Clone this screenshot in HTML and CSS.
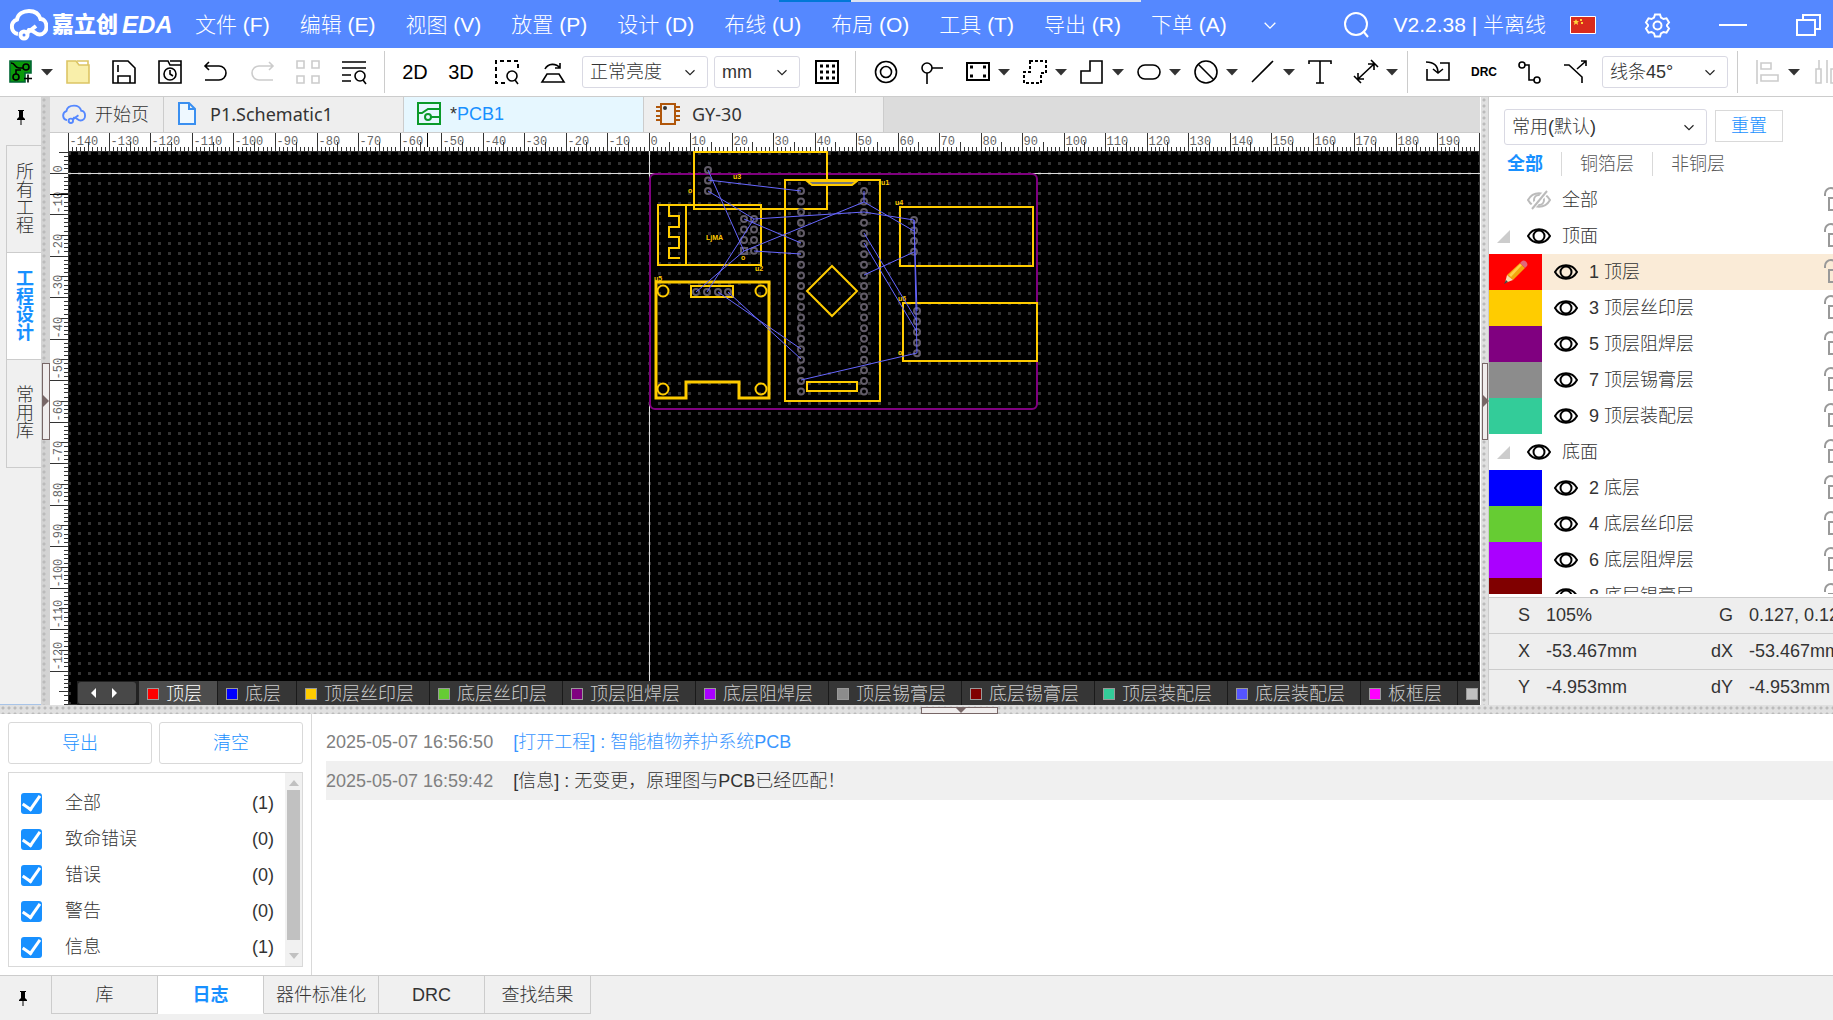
FILE: index.html
```html
<!DOCTYPE html>
<html lang="zh-CN">
<head>
<meta charset="utf-8">
<title>嘉立创EDA</title>
<link rel="stylesheet" href="styles.css">
</head>
<body>
<svg class="defs" aria-hidden="true">
  <symbol id="cloud" viewBox="0 0 38 32"><path d="M8 25a7.500 7.500 0 0 1-1-14.500C8 5 13 2 19 2c6 0 10 3 11.500 8 4 0 6 4 6 8s-3 7.500-7 7.500c-5 0-6-5-10.500-4.500L17 24"/><circle cx="14" cy="26" r="3.500"/><path d="M17 24l9-7"/></symbol>
  <symbol id="chev" viewBox="0 0 12 8"><path d="M2 2l4 4 4-4"/></symbol>
  <symbol id="caret" viewBox="0 0 12 8"><path d="M0 1h12L6 7.500z"/></symbol>
  <symbol id="eye" viewBox="0 0 24 16"><path d="M1 8c5-9 17-9 22 0-5 9-17 9-22 0z"/><circle cx="12" cy="8" r="5.500"/></symbol>
  <symbol id="eyeoff" viewBox="0 0 24 20"><path d="M1 10c5-9 17-9 22 0-5 9-17 9-22 0z"/><circle cx="12" cy="10" r="5"/><path d="M20 1L4 19" stroke="#fff" stroke-width="5"/><path d="M20 1L5 19"/></symbol>
  <symbol id="lock" viewBox="0 0 24 26"><path d="M1 9V7a6 6 0 0 1 12 0v4M5 11h16v12H5z"/></symbol>
  <symbol id="fold" viewBox="0 0 13 13"><path d="M13 0v13H0z"/></symbol>
  <symbol id="pin" viewBox="0 0 10 16"><path d="M2 1h6v1H7v6l2 2v1H5.500v5h-1v-5H1v-1l2-2V2H2z"/></symbol>
</svg>

<header class="title">
  <div class="progress"><i></i></div>
  <a class="logo" href="#"><svg width="38" height="32"><use href="#cloud"/></svg><b>嘉立创</b><em>EDA</em></a>
  <nav class="menu">
    <button>文件 (F)</button><button>编辑 (E)</button><button>视图 (V)</button><button>放置 (P)</button><button>设计 (D)</button><button>布线 (U)</button><button>布局 (O)</button><button>工具 (T)</button><button>导出 (R)</button><button>下单 (A)</button>
    <button class="more" aria-label="更多"><svg width="16" height="11"><use href="#chev"/></svg></button>
  </nav>
  <div class="info">
    <button aria-label="搜索"><svg width="25" height="26" viewBox="0 0 25 26"><circle cx="12" cy="12" r="11"/><path d="M19 19l5 6"/></svg></button>
    <span>V2.2.38 | 半离线</span>
    <svg class="flag" width="26" height="18" viewBox="0 0 26 18"><path fill="#d92b1c" stroke="#fff" d="M.5.500h25v17H.5z"/><path fill="#ffd43b" stroke="none" d="M6 3l1 2h2L7.500 6.500 8 9 6 7.500 4 9l.5-2.500L3 5h2zM10 3h2v2h-2zM11 6h2v2h-2z"/></svg>
  </div>
  <div class="win">
    <button aria-label="设置"><svg width="25" height="25" viewBox="0 0 25 25"><path d="M10 1.500h5l1 3 2.500 1.500 3-.7L24 9.500 22 12v1l2 2.500-2.500 4.200-3-.7-2.500 1.500-1 3h-5l-1-3L6.500 19l-3 .7L1 15.500 3 13v-1L1 9.500l2.500-4.200 3 .7L9 4.500z"/><circle cx="12.500" cy="12.500" r="4"/></svg></button>
    <button aria-label="最小化"><svg width="28" height="24" viewBox="0 0 28 24"><path d="M0 12h28"/></svg></button>
    <button aria-label="还原"><svg width="25" height="22" viewBox="0 0 25 22"><path d="M1 6h18v15H1zM7 6V1h17v14h-5"/></svg></button>
  </div>
</header>

<div class="toolbar">
  <div class="group">
    <button class="drop" aria-label="新建"><svg width="24" height="24"><path fill="#0a9a0a" stroke="#063" d="M1 1h21v12h-6v9H1z"/><circle cx="17" cy="7" r="3"/><circle cx="7" cy="17" r="3"/><path d="M2 3c5 0 3 5 8 5h4M7 14v-4h5M15 18.500h8M19 14.500v8"/></svg><svg class="caret" width="12" height="8"><use href="#caret"/></svg></button>
    <button aria-label="打开"><svg width="24" height="24"><path fill="#f9efaa" stroke="#dcc564" d="M1 1h9l3 4h10v18H1z"/><path stroke="#dcc564" d="M11 1h11v4"/></svg></button>
    <button aria-label="保存"><svg width="24" height="24"><path d="M1 1h15l7 7v15H1zM6 23v-7h12v7M6 5v7"/></svg></button>
    <button aria-label="历史"><svg width="24" height="24"><path d="M1 23V1h9l2 4h11v18zM12 1h11v4"/><circle cx="12" cy="14" r="6"/><path d="M12 10v4l3 2"/></svg></button>
    <button aria-label="撤销"><svg width="24" height="24"><path d="M5 2L1 6l4 4M1 6h14a7 7 0 0 1 0 14H1"/></svg></button>
    <button class="off" aria-label="重做"><svg width="24" height="24"><path d="M19 2l4 4-4 4M23 6H9a7 7 0 0 0 0 14h14"/></svg></button>
    <button class="off" aria-label="阵列"><svg width="24" height="24"><path d="M1 1h7v7H1zM16 1h7v7h-7zM1 16h7v7H1zM16 16h7v7h-7z"/></svg></button>
    <button aria-label="查找"><svg width="24" height="24"><path d="M0 2h24M0 8h24M0 15h9M0 21h9M21 20l3 4"/><circle cx="18" cy="16" r="5"/></svg></button>
  </div>
  <i class="sep"></i>
  <div class="group">
    <button class="word">2D</button>
    <button class="word">3D</button>
    <button aria-label="框选"><svg width="24" height="24"><path stroke-dasharray="4 3" stroke-width="2" d="M10 23H1V1h22v9"/><circle cx="17" cy="16" r="5"/><path d="M20 20l3 4"/></svg></button>
    <button aria-label="翻转"><svg width="24" height="24"><path d="M6 14h12l5 8H1zM4 9c3-6 11-6 15-1M19 3v5h-5"/></svg></button>
  </div>
  <div class="group picks">
    <span class="pick wide"><select aria-label="亮度"><option>正常亮度</option></select><svg width="14" height="9"><use href="#chev"/></svg></span>
    <span class="pick"><select aria-label="单位"><option>mm</option></select><svg width="14" height="9"><use href="#chev"/></svg></span>
  </div>
  <div class="group after">
    <button aria-label="网格"><svg width="24" height="24"><path stroke-width="2" d="M1 1h22v22H1z"/><path stroke-dasharray="3 3" stroke-width="3" d="M5 6h15M5 12h15M5 18h15"/></svg></button>
  </div>
  <i class="sep"></i>
  <div class="group">
    <button aria-label="焊盘"><svg width="24" height="24"><circle cx="12" cy="12" r="10.500"/><circle cx="12" cy="12" r="5.500"/></svg></button>
    <button aria-label="过孔"><svg width="24" height="24"><circle cx="7" cy="8" r="5"/><path d="M12 8h11M7 13v11"/></svg></button>
    <button class="drop" aria-label="矩形"><svg width="24" height="24"><path stroke-width="2" d="M1 3h22v17H1z"/><path stroke-width="3" d="M4 7h3M17 7h3M4 16h3M17 16h3"/></svg><svg class="caret" width="12" height="8"><use href="#caret"/></svg></button>
    <button class="drop" aria-label="区域"><svg width="24" height="24"><path stroke-dasharray="3 2" stroke-width="2" d="M7 1h16v12h-5v10H1V12h6z"/></svg><svg class="caret" width="12" height="8"><use href="#caret"/></svg></button>
    <button class="drop" aria-label="多边形"><svg width="24" height="24"><path d="M10 1h12v22H1V11h9z"/></svg><svg class="caret" width="12" height="8"><use href="#caret"/></svg></button>
    <button class="drop" aria-label="槽"><svg width="24" height="24"><rect x="1" y="5" width="22" height="14" rx="7"/></svg><svg class="caret" width="12" height="8"><use href="#caret"/></svg></button>
    <button class="drop" aria-label="禁止区"><svg width="24" height="24"><circle cx="12" cy="12" r="11"/><path d="M4 4l16 16"/></svg><svg class="caret" width="12" height="8"><use href="#caret"/></svg></button>
    <button class="drop" aria-label="线条"><svg width="24" height="24"><path d="M1 22L22 1"/></svg><svg class="caret" width="12" height="8"><use href="#caret"/></svg></button>
    <button aria-label="文本"><svg width="24" height="24"><path d="M1 4V1h22v3M12 1v22M8 23h8"/></svg></button>
    <button class="drop" aria-label="尺寸"><svg width="24" height="24"><path d="M4 19L20 4M14 4h6v6M4 13v6h6M17 0l7 7M0 16l7 7"/></svg><svg class="caret" width="12" height="8"><use href="#caret"/></svg></button>
  </div>
  <i class="sep"></i>
  <div class="group">
    <button aria-label="导入变更"><svg width="24" height="24"><path d="M14 3h9v17H1V9M0 2c8 0 12 3 12 11M7 9l5 4 5-4"/></svg></button>
    <button class="word small">DRC</button>
    <button aria-label="单路布线"><svg width="24" height="24"><circle cx="4" cy="5" r="3"/><circle cx="19" cy="20" r="3"/><path d="M7 5h4v15h5"/></svg></button>
    <button aria-label="差分布线"><svg width="24" height="24"><path d="M0 5h5l13 12v6M13 9l9-8M17 1h5v5"/></svg></button>
  </div>
  <div class="group mode">
    <span class="pick wide"><select aria-label="布线拐角"><option>线条45°</option></select><svg width="14" height="9"><use href="#chev"/></svg></span>
  </div>
  <i class="sep"></i>
  <div class="group">
    <button class="drop off" aria-label="对齐"><svg width="24" height="24"><path d="M1 0v24M5 3h10v6H5zM5 15h17v6H5z"/></svg><svg class="caret" width="12" height="8"><use href="#caret"/></svg></button>
    <button class="off" aria-label="分布"><svg width="24" height="24"><path d="M6 0v9M3 9h5v14H3zM14 0v23M18 9h5v14h-5z"/></svg></button>
  </div>
</div>

<main class="work">
  <aside class="side">
    <button class="pinbtn" aria-label="固定"><svg width="10" height="16"><use href="#pin"/></svg></button>
    <div class="vtabs"><button>所有工程</button><button class="on">工程设计</button><button>常用库</button></div>
  </aside>
  <div class="split v dark"><button class="grip" aria-label="折叠左侧"></button></div>
  <section class="editor">
    <nav class="tabs">
      <button class="home"><svg class="blue" width="24" height="21"><use href="#cloud"/></svg>开始页</button>
      <button><svg width="18" height="24"><path stroke="#3a8ff0" fill="#eef8ff" d="M1 1h10l6 6v15H1zM11 1v6h6"/></svg><span class="latin">P1.Schematic1</span></button>
      <button class="on"><svg width="24" height="24"><path stroke="#0a9a2a" d="M1 1h22v21H1zM1 11h4l6-4h12M14 15h9"/><circle stroke="#0a9a2a" cx="11" cy="15" r="3"/></svg><span><i>*</i>PCB1</span></button>
      <button class="part"><svg width="24" height="24"><path stroke="#b0560a" d="M5 2h14v20H5zM0 5h5M0 9h5M0 14h5M0 18h5M19 5h5M19 9h5M19 14h5M19 18h5"/><circle cx="9" cy="6" r="1"/></svg><span class="latin">GY-30</span></button>
    </nav>
    <div class="stage">
      <svg class="ruler top" id="ruler-x"></svg>
      <svg class="ruler left" id="ruler-y"></svg>
      <div class="canvas">
        <svg class="board">
          <defs><pattern id="dots" width="10" height="10" patternUnits="userSpaceOnUse"><rect x="1" y="2" width="1" height="1" fill="#a0a0a0"/></pattern></defs>
          <rect width="100%" height="100%" fill="url(#dots)"/>
          <path class="axis" d="M0 22.500h4000M581.500 0v4000"/>
          <g transform="translate(-68 -151)">
            <rect class="outline" x="650" y="174" width="387" height="235" rx="5"/>
            <g class="silk">
              <path d="M694 152h133v57H694z"/>
              <path d="M658 205h103v60H658zM686 205v60M669 205v11h10v11h-10v10h10v11h-10v10h11"/>
              <path class="bold" d="M656 282h113v116h-30v-16h-53v16h-30z"/>
              <path d="M691 286h42v11h-42z"/>
              <circle cx="663" cy="291" r="5.500"/><circle cx="761" cy="291" r="5.500"/><circle cx="663" cy="389" r="5.500"/><circle cx="761" cy="389" r="5.500"/>
              <path d="M785 180h95v221h-95zM832 266l25 25-25 25-25-25zM807 382h50v9h-50z"/>
              <path fill="#777" d="M807 181l5 4h40l5-4z"/>
              <path d="M900 207h133v59H900zM903 303h134v58H903z"/>
            </g>
            <g class="label">
              <text x="706" y="240">LjMA</text><text x="733" y="179">u3</text><text x="688" y="193">o</text><text x="741" y="260">o</text><text x="755" y="271">u2</text><text x="654" y="281">u5</text><text x="881" y="185">u1</text><text x="895" y="205">u4</text><text x="898" y="301">u6</text><text x="898" y="355">o</text>
            </g>
            <g class="pads" id="pads"></g>
            <path class="rats" d="M708 170l36 81M708 180l93 11M708 191l46 28 110-7 50 8M744 219l57 24M754 251l47 3M696 292l48-41 120-49 50 29M754 219l-47 73M718 292l83 57M728 292l73 67M801 380l116-27M864 191v11M864 233l53 88M864 243l53 89M864 275l50-23M914 220l3 91M914 220l3 133"/>
          </g>
        </svg>
        <nav class="layers">
          <span class="arrows"><button aria-label="上一层"></button><button aria-label="下一层"></button></span>
          <button class="on"><i class="red"></i>顶层</button><button><i class="blueb"></i>底层</button><button><i class="gold"></i>顶层丝印层</button><button><i class="green"></i>底层丝印层</button><button><i class="purple"></i>顶层阻焊层</button><button><i class="violet"></i>底层阻焊层</button><button><i class="grey"></i>顶层锡膏层</button><button><i class="maroon"></i>底层锡膏层</button><button><i class="mint"></i>顶层装配层</button><button><i class="indigo"></i>底层装配层</button><button><i class="pink"></i>板框层</button><button aria-label="多层"><i class="silver"></i></button>
        </nav>
      </div>
    </div>
  </section>
  <div class="split v right"><button class="grip" aria-label="折叠右侧"></button></div>
  <aside class="props">
    <div class="preset">
      <span class="pick"><select aria-label="图层配置"><option>常用(默认)</option></select><svg width="14" height="9"><use href="#chev"/></svg></span>
      <button>重置</button>
    </div>
    <nav class="filter"><button class="on">全部</button><button>铜箔层</button><button>非铜层</button></nav>
    <ul class="list">
      <li class="head"><b></b><svg class="eye off" width="24" height="20"><use href="#eyeoff"/></svg>全部<svg class="lock" width="24" height="26"><use href="#lock"/></svg></li>
      <li class="head"><b><svg width="13" height="13"><use href="#fold"/></svg></b><svg class="eye" width="24" height="16"><use href="#eye"/></svg>顶面<svg class="lock" width="24" height="26"><use href="#lock"/></svg></li>
      <li class="on"><i class="red"><svg width="26" height="26" viewBox="0 0 26 26"><path fill="#f2a60d" d="M4 16L17 4l5 5L10 21z"/><path fill="#ffd04a" d="M6 16L17 5l2 1L8 18z"/><path fill="#e0687a" d="M17 4l2-2c2-2 7 2 5 5l-2 2z"/><path fill="#f6dfb0" d="M4 16l6 5-8 3z"/><path fill="#444" d="M3 21l2 2-4 2z"/></svg></i><svg class="eye" width="24" height="16"><use href="#eye"/></svg>1 顶层<svg class="lock" width="24" height="26"><use href="#lock"/></svg></li>
      <li><i class="gold"></i><svg class="eye" width="24" height="16"><use href="#eye"/></svg>3 顶层丝印层<svg class="lock" width="24" height="26"><use href="#lock"/></svg></li>
      <li><i class="purple"></i><svg class="eye" width="24" height="16"><use href="#eye"/></svg>5 顶层阻焊层<svg class="lock" width="24" height="26"><use href="#lock"/></svg></li>
      <li><i class="grey"></i><svg class="eye" width="24" height="16"><use href="#eye"/></svg>7 顶层锡膏层<svg class="lock" width="24" height="26"><use href="#lock"/></svg></li>
      <li><i class="mint"></i><svg class="eye" width="24" height="16"><use href="#eye"/></svg>9 顶层装配层<svg class="lock" width="24" height="26"><use href="#lock"/></svg></li>
      <li class="head"><b><svg width="13" height="13"><use href="#fold"/></svg></b><svg class="eye" width="24" height="16"><use href="#eye"/></svg>底面<svg class="lock" width="24" height="26"><use href="#lock"/></svg></li>
      <li><i class="blueb"></i><svg class="eye" width="24" height="16"><use href="#eye"/></svg>2 底层<svg class="lock" width="24" height="26"><use href="#lock"/></svg></li>
      <li><i class="green"></i><svg class="eye" width="24" height="16"><use href="#eye"/></svg>4 底层丝印层<svg class="lock" width="24" height="26"><use href="#lock"/></svg></li>
      <li><i class="violet"></i><svg class="eye" width="24" height="16"><use href="#eye"/></svg>6 底层阻焊层<svg class="lock" width="24" height="26"><use href="#lock"/></svg></li>
      <li><i class="maroon"></i><svg class="eye" width="24" height="16"><use href="#eye"/></svg>8 底层锡膏层<svg class="lock" width="24" height="26"><use href="#lock"/></svg></li>
    </ul>
    <table class="status">
      <tr><th>S</th><td>105%</td><th>G</th><td>0.127, 0.127mm</td></tr>
      <tr><th>X</th><td>-53.467mm</td><th>dX</th><td>-53.467mm</td></tr>
      <tr><th>Y</th><td>-4.953mm</td><th>dY</th><td>-4.953mm</td></tr>
    </table>
  </aside>
</main>

<div class="split h"><button class="grip" aria-label="折叠底部"></button></div>

<section class="bottom">
  <div class="log">
    <div class="filters">
      <div class="actions"><button>导出</button><button>清空</button></div>
      <div class="box">
        <div class="checks">
          <label><input type="checkbox" checked>全部<span>(1)</span></label>
          <label><input type="checkbox" checked>致命错误<span>(0)</span></label>
          <label><input type="checkbox" checked>错误<span>(0)</span></label>
          <label><input type="checkbox" checked>警告<span>(0)</span></label>
          <label><input type="checkbox" checked>信息<span>(1)</span></label>
        </div>
        <div class="bar"><svg width="10" height="6"><path d="M0 6h10L5 0z"/></svg><i></i><svg width="10" height="6"><path d="M0 0h10L5 6z"/></svg></div>
      </div>
    </div>
    <div class="lines">
      <p><time>2025-05-07 16:56:50</time><a href="#">[打开工程] : 智能植物养护系统PCB</a></p>
      <p class="alt"><time>2025-05-07 16:59:42</time><span>[信息] : 无变更，原理图与PCB已经匹配！</span></p>
    </div>
  </div>
  <nav class="btabs">
    <button class="pinbtn" aria-label="固定"><svg width="10" height="16"><use href="#pin"/></svg></button>
    <button>库</button><button class="on">日志</button><button class="long">器件标准化</button><button>DRC</button><button>查找结果</button>
  </nav>
</section>
<script src="rulers.js"></script>
</body>
</html>
```

FILE: styles.css
```css
* { box-sizing: border-box; }
body {
  margin: 0;
  height: 100vh;
  display: flex;
  flex-direction: column;
  overflow: hidden;
  background: #fff;
  color: #333;
  font: 18px/24px "Liberation Sans", "Noto Sans CJK SC", sans-serif;
  font-weight: 300;
}
button, select, input { font: inherit; color: inherit; margin: 0; }
button { padding: 0; border: 0; background: none; white-space: nowrap; }
svg { display: block; flex: none; fill: none; stroke: currentColor; stroke-width: 2; overflow: visible; }
a { text-decoration: none; }
i, em { font-style: normal; }
.defs { position: absolute; width: 0; height: 0; }

/* colours of the board layers */
.red { background: #f00; }
.gold { background: #fc0; }
.purple { background: #800080; }
.grey { background: #8c8c8c; }
.mint { background: #3c9; }
.blueb { background: #00f; }
.green { background: #6c3; }
.violet { background: #a0f; }
.maroon { background: #800000; }
.indigo { background: #55f; }
.pink { background: #f0f; }
.silver { background: #c0c0c0; }

/* title bar */
.title {
  position: relative;
  flex: 0 0 48px;
  display: flex;
  align-items: center;
  padding: 2px 12px 0 10px;
  background: #58f;
  color: #fff;
  font-size: 21px;
  line-height: 30px;
}
.title .progress { position: absolute; top: 0; left: 779px; width: 362px; height: 2px; background: #dde3f0; }
.title .progress i { display: block; width: 20%; height: 100%; background: #0078d7; }
.logo { display: flex; align-items: center; width: 185px; color: #fff; font-weight: 700; }
.logo svg { stroke-width: 4; }
.logo b { margin-left: 4px; font-size: 22px; }
.logo em { margin-left: 4px; font-size: 24px; font-style: italic; }
.menu { display: flex; gap: 30px; flex: 1; }
.menu svg { stroke-width: 1; }
.more { margin-left: 5px; }
.info { display: flex; align-items: center; gap: 24px; }
.info .flag { stroke-width: 1; }
.win { display: flex; align-items: center; gap: 49px; margin-left: 49px; }

/* toolbar */
.toolbar {
  flex: 0 0 49px;
  display: flex;
  align-items: center;
  padding-left: 9px;
  border-bottom: 1px solid #ccc;
  overflow: hidden;
  color: #000;
}
.toolbar svg { stroke-width: 1.6; }
.group { display: flex; align-items: center; gap: 22px; flex: none; }
.group > button { display: flex; align-items: center; justify-content: center; min-width: 24px; height: 24px; }
.group > .drop { gap: 8px; margin-right: -9px; }
.group .caret { fill: #333; stroke: none; }
.off > svg:first-child { stroke: #ccc; }
.sep { flex: none; width: 1px; height: 42px; margin: 0 18px; background: #ccc; }
.group > .word { width: 24px; font-size: 20px; }
.group > .small { font-size: 12px; font-weight: 700; }
.picks { gap: 6px; margin: 0 15px 0 17px; }
.after { margin-right: -2px; }
.mode { margin: 0 -9px 0 14px; }
.pick { position: relative; display: block; width: 86px; height: 32px; color: #333; }
.pick.wide { width: 126px; }
.pick select {
  width: 100%;
  height: 100%;
  padding: 0 7px;
  border: 1px solid #d9d9e3;
  border-radius: 3px;
  background: #fff;
  appearance: none;
}
.pick svg { position: absolute; right: 11px; top: 50%; margin-top: -4px; stroke-width: 1; stroke: #222; }

/* workspace */
.work { flex: 1; min-height: 0; display: flex; }
.side { flex: 0 0 41px; background: #f0f0f0; border-bottom: 1px solid #a8c4e8; }
.pinbtn svg { fill: #000; stroke: none; }
.side .pinbtn { display: flex; justify-content: center; width: 100%; padding: 12px 0 20px; }
.vtabs { display: flex; flex-direction: column; margin-left: 6px; border: solid #ccc; border-width: 1px 0 1px 1px; }
.vtabs button { height: 107px; padding: 0 2px 3px 0; writing-mode: vertical-rl; display: flex; align-items: center; justify-content: center; border-bottom: 1px solid #ccc; }
.vtabs button:last-child { border: 0; }
.vtabs .on { background: #fff; color: #1890ff; font-weight: 700; }

.split { position: relative; background: radial-gradient(circle at 3px 3px, #bbb 1px, transparent 2px) 0 0 / 6px 6px #e0e0e0; }
.split.v { flex: 0 0 9px; background-repeat: repeat-y; }
.split.dark { background-color: #d3d3d3; }
.split.right { border-left: 1px solid #fff; border-right: 1px solid #ccc; }
.split.h { flex: 0 0 9px; }
.grip { position: absolute; border: 1px solid #766; background: #f0eded; }
.v .grip { left: 1px; right: 0; top: 266px; height: 77px; }
.v .grip::after { content: ""; position: absolute; left: 0; top: 31px; border: 6px solid transparent; border-left-color: #766; border-right: 0; }
.h .grip { left: 50%; margin-left: 4px; top: 2px; bottom: 0; width: 77px; }
.h .grip::after { content: ""; position: absolute; left: 34px; top: 0; border: 5px solid transparent; border-top-color: #766; border-bottom: 0; }

.editor { flex: 1; min-width: 0; display: flex; flex-direction: column; }
.tabs { flex: 0 0 36px; display: flex; background: #dcdcdc; border-bottom: 1px solid #ccc; }
.tabs button { display: flex; align-items: center; gap: 14px; width: 240px; padding: 0 14px 1px; background: #eee; border-right: 1px solid #ccc; }
.tabs .home { width: 114px; padding: 0 12px; gap: 9px; }
.tabs .part { padding-left: 12px; gap: 12px; }
.tabs .blue { stroke: #58f; stroke-width: 3; }
.tabs .latin { font-family: "Noto Sans", sans-serif; font-weight: 400; }
.tabs .on { background: #e6f7ff; color: #1890ff; padding-left: 13px; gap: 9px; }
.tabs .on i { color: #333; }
.stage { flex: 1; min-height: 0; display: grid; grid-template: 18px 1fr / 18px 1fr; overflow: hidden; }
.ruler { stroke: #333; stroke-width: 1; width: 100%; height: 100%; overflow: hidden; shape-rendering: crispEdges; }
.ruler text { fill: #666; stroke: none; font: 12px "Liberation Mono", monospace; }
.ruler.top { grid-column: 1 / 3; }
.canvas { position: relative; background: #000; overflow: hidden; }
.board { width: 100%; height: 100%; overflow: hidden; }
.axis { stroke: #ddd; stroke-width: 1; }
.outline { stroke: #800080; }
.silk { stroke: #fc0; }
.silk .bold { stroke-width: 3; }
.label text { fill: #fc0; stroke: none; font: 700 7px "Liberation Sans", sans-serif; }
.pads { stroke: #625c68; }
.rats { stroke: #66f; stroke-width: 1; }
.layers { position: absolute; left: 9px; right: 0; bottom: 0; height: 24px; display: flex; background: #222; color: #ccc; overflow: hidden; }
.arrows { flex: none; display: flex; width: 58px; margin: 1px 3px 1px 1px; padding-right: 6px; border-radius: 3px; background: #484848; justify-content: center; align-items: center; gap: 16px; }
.arrows button { border: 5px solid transparent; border-left: 0; border-right-color: #fff; }
.arrows button + button { border: 5px solid transparent; border-right: 0; border-left-color: #fff; }
.layers > button { flex: none; display: flex; align-items: center; padding: 1px 15px 0 8px; gap: 7px; border-right: 1px solid #1a1a1a; background: #363636; }
.layers i { width: 12px; height: 12px; border: 1px solid #999; }
.layers .on { background: #4d4d4d; color: #fff; }

/* layer manager */
.props { flex: 0 0 344px; display: flex; flex-direction: column; min-height: 0; overflow: hidden; background: #fff; }
.preset { display: flex; gap: 8px; padding: 12px 15px 0; }
.preset .pick { width: 203px; height: 36px; }
.preset button { width: 68px; height: 32px; margin-top: 1px; border: 1px solid #d9d9d9; color: #1890ff; }
.filter { display: flex; padding: 7px 0 6px; }
.filter button { padding: 0 18px; border-right: 1px solid #d9d9d9; color: #555; }
.filter button:last-child { border: 0; }
.filter .on { color: #1890ff; font-weight: 700; }
.list { flex: 1; min-height: 0; margin: 0; padding: 0; list-style: none; overflow: hidden; }
.list li { display: flex; align-items: center; height: 36px; }
.list i { width: 53px; height: 36px; display: grid; place-items: center; }
.list i svg { stroke: none; }
.list b { width: 26px; padding-left: 8px; }
.list b svg { fill: #ccc; stroke: none; }
.list .eye { margin: 0 11px 0 12px; stroke: #000; }
.list .eye.off { stroke: #bbb; }
.list .on { background: #faebd7; }
.list .lock { margin: 0 -15px 0 auto; stroke: #999; }
.status { flex: none; width: 100%; margin-top: 3px; table-layout: fixed; border-collapse: collapse; background: #eee; white-space: nowrap; }
.status tr { height: 36px; border-top: 1px solid #ccc; }
.status th { width: 41px; padding: 0; font-weight: 400; text-align: right; }
.status th:nth-child(3) { width: 62px; }
.status td { width: 100px; padding: 0 0 0 16px; }
.status td:nth-child(2) { width: 141px; }

/* log panel */
.bottom { flex: 0 0 306px; display: flex; flex-direction: column; }
.log { flex: 1; min-height: 0; display: flex; }
.filters { flex: 0 0 312px; display: flex; flex-direction: column; padding: 8px 8px 8px; border-right: 1px solid #d9d9d9; }
.actions { display: flex; gap: 7px; margin-bottom: 8px; }
.actions button { width: 144px; height: 42px; border: 1px solid #d9d9d9; border-radius: 3px; color: #1890ff; }
.box { flex: 1; display: flex; width: 295px; border: 1px solid #d9d9d9; }
.checks { flex: 1; padding-top: 12px; }
.checks label { display: flex; align-items: center; height: 36px; padding: 0 11px 0 12px; }
.checks input { appearance: none; display: grid; place-items: center; width: 21px; height: 21px; margin-right: 23px; border-radius: 3px; background: #1890ff; }
.checks input::after { content: ""; width: 8px; height: 15px; margin-top: -4px; border: solid #fff; border-width: 0 3px 3px 0; transform: rotate(35deg); }
.checks span { margin-left: auto; }
.bar { display: flex; flex-direction: column; align-items: center; width: 17px; padding: 7px 2px; background: #f1f1f1; }
.bar svg { fill: #c1c1c1; stroke: none; }
.bar i { width: 13px; height: 150px; margin: 4px 0 auto; background: #c1c1c1; }
.lines { flex: 1; padding: 8px 0 0 14px; }
.lines p { display: flex; gap: 20px; margin: 0; height: 39px; align-items: center; }
.lines .alt { background: #f0f0f0; }
.lines time { color: #808080; }
.lines a { color: #3a96ff; }
.btabs { flex: 0 0 45px; display: flex; padding-bottom: 6px; border-top: 1px solid #ccc; background: #f0f0f0; }
.btabs button { width: 106px; padding-top: 1px; border: solid #ccc; border-width: 0 1px 1px 0; }
.btabs .long { width: 115px; }
.btabs .on { background: #fff; border-bottom-color: #fff; color: #1890ff; font-weight: 700; }
.btabs .pinbtn { display: grid; place-items: center; width: 52px; padding: 5px 6px 0 0; border-bottom: 0; }
```

FILE: rulers.js
```js
const NS = 'http://www.w3.org/2000/svg';
const add = (parent, tag, attrs, text) => {
  const el = document.createElementNS(NS, tag);
  for (const k in attrs) el.setAttribute(k, attrs[k]);
  if (text !== undefined) el.textContent = text;
  parent.appendChild(el);
};
const UNIT = 4.15;
const len = n => (n % 10 === 0 ? 18 : n % 5 === 0 ? 9 : 4);

const rx = document.getElementById('ruler-x');
const width = rx.getBoundingClientRect().width;
for (let n = -140; 599 + n * UNIT < width; n++) {
  const x = Math.floor(599 + n * UNIT) + 0.5;
  add(rx, 'path', { d: `M${x} 18v-${len(n)}` });
  if (n % 10 === 0) add(rx, 'text', { x: x + 1, y: 12 }, n);
}
add(rx, 'path', { d: 'M377.5 0v14', stroke: '#000' });

const ry = document.getElementById('ruler-y');
const height = ry.getBoundingClientRect().height;
for (let n = 5; 22 - n * UNIT < height; n--) {
  const y = Math.floor(22 - n * UNIT) + 0.5;
  add(ry, 'path', { d: `M18 ${y}h-${len(n)}` });
  if (n % 10 === 0) add(ry, 'text', { transform: `translate(12 ${y - 1}) rotate(-90)` }, n);
}
add(ry, 'path', { d: 'M0 43.5h18', stroke: '#000' });

const pads = document.getElementById('pads');
const column = (x, y, count) => {
  for (let i = 0; i < count; i++) add(pads, 'circle', { cx: x, cy: y + i * 10.55, r: 3 });
};
column(708, 170, 3);
column(744, 219, 4);
column(754, 219, 4);
column(801, 191, 20);
column(864, 191, 20);
column(914, 220, 4);
column(917, 311, 5);
[696, 707, 718, 728].forEach(x => column(x, 292, 1));
add(pads, 'rect', { x: 741, y: 248, width: 6, height: 6 });
```
